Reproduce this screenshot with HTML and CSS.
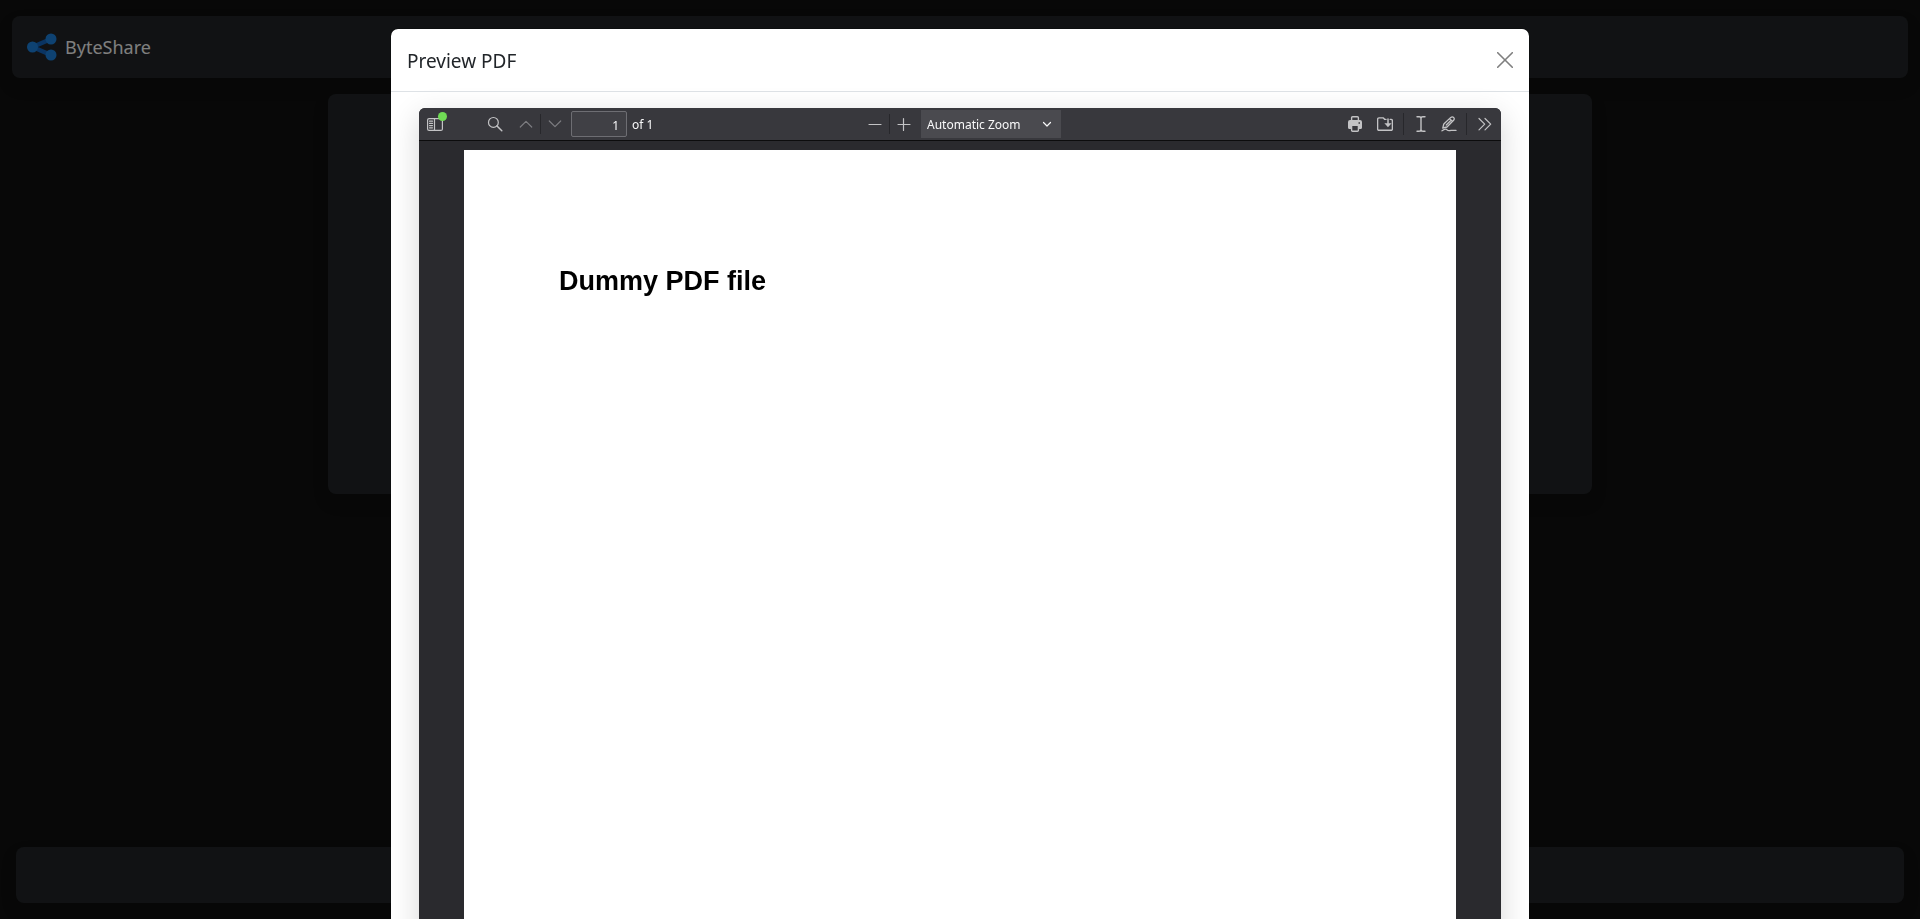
FILE: index.html
```html
<!DOCTYPE html>
<html lang="en">
<head>
<meta charset="utf-8">
<meta name="viewport" content="width=device-width, initial-scale=1">
<title>ByteShare</title>
<link rel="stylesheet" href="styles.css">
</head>
<body>
<div class="app">
  <nav class="navbar">
    <a class="brand" href="#">
      <svg class="brand-logo" viewBox="0 0 30 28" aria-hidden="true">
        <path d="M24 6 5.500 14 24 22" fill="none" stroke="#1468c4" stroke-width="4.500"/>
        <circle cx="5.500" cy="14" r="5.500" fill="#1d85e4"/>
        <circle cx="24" cy="6" r="5.500" fill="#1d85e4"/>
        <circle cx="24" cy="22" r="5.500" fill="#1d85e4"/>
      </svg>
      <span>ByteShare</span>
    </a>
  </nav>
  <main class="content"><section class="card"></section></main>
  <footer class="footer"></footer>
</div>

<div class="backdrop"></div>

<div class="modal" role="dialog" aria-modal="true" aria-labelledby="modal-title">
  <div class="dialog">
    <header class="dialog-header">
      <h1 class="dialog-title" id="modal-title">Preview PDF</h1>
      <button class="close" type="button" aria-label="Close">
        <svg viewBox="0 0 16 16" aria-hidden="true"><path d="M.7.7 15.300 15.300M15.300.7.7 15.300" stroke="currentColor" stroke-width="1.600" stroke-linecap="round"/></svg>
      </button>
    </header>
    <div class="dialog-body">
      <div class="viewer">
        <div class="toolbar">
          <div class="group">
            <button class="tool sidebar-toggle" type="button" aria-label="Toggle Sidebar">
              <svg viewBox="0 0 16 16" aria-hidden="true"><rect x=".6" y="2.600" width="14.800" height="11.800" rx="1.500"/><path d="M7.500 2.500v12M2.500 5.200h3M2.500 7.400h3M2.500 9.600h3M2.500 11.800h3"/></svg>
              <span class="badge"></span>
            </button>
            <button class="tool find" type="button" aria-label="Find in Document">
              <svg viewBox="0 0 16 16" aria-hidden="true"><circle cx="6.400" cy="6.400" r="4.900"/><path d="m10 10 4.800 4.800" stroke-width="1.500"/></svg>
            </button>
            <button class="tool previous" type="button" aria-label="Previous Page" disabled>
              <svg viewBox="0 0 16 16" aria-hidden="true"><path d="m2.300 11 5.700-5.700L13.700 11"/></svg>
            </button>
            <span class="separator"></span>
            <button class="tool" type="button" aria-label="Next Page" disabled>
              <svg viewBox="0 0 16 16" aria-hidden="true"><path d="M2.300 5 8 10.700 13.700 5"/></svg>
            </button>
            <input class="page-number" type="text" value="1" aria-label="Page">
            <span class="page-count">of 1</span>
          </div>
          <div class="group middle">
            <button class="tool" type="button" aria-label="Zoom Out">
              <svg viewBox="0 0 16 16" aria-hidden="true"><path d="M2 8.500h12"/></svg>
            </button>
            <span class="separator"></span>
            <button class="tool" type="button" aria-label="Zoom In">
              <svg viewBox="0 0 16 16" aria-hidden="true"><path d="M2 8.500h12M7.500 2.500v12"/></svg>
            </button>
            <div class="scale">
              <select aria-label="Zoom"><option>Automatic Zoom</option></select>
              <svg class="scale-arrow" viewBox="0 0 16 16" aria-hidden="true"><path d="m4.500 6.500 3.500 3.500 3.500-3.500"/></svg>
            </div>
          </div>
          <div class="group end">
            <button class="tool" type="button" aria-label="Print">
              <svg viewBox="0 0 16 16" aria-hidden="true"><path d="M4.600 5V1.700q0-1 1-1h4.800q1 0 1 1V5" stroke-width="1.400"/><path class="solid" fill-rule="evenodd" d="M3 4h10a2 2 0 0 1 2 2v5.500a1.500 1.500 0 0 1-1.500 1.500h-11A1.500 1.500 0 0 1 1 11.500V6a2 2 0 0 1 2-2ZM5 10v3h6v-3ZM11.500 6.200v1.500H13V6.200Z"/><path d="M4.600 9.800v4.500q0 1 1 1h4.800q1 0 1-1V9.800" stroke-width="1.400"/></svg>
            </button>
            <button class="tool save" type="button" aria-label="Save">
              <svg viewBox="0 0 16 16" aria-hidden="true"><path d="M9 3.400H7.800L6.400 1.900H2A1.400 1.400 0 0 0 .6 3.300v9.600A1.400 1.400 0 0 0 2 14.300h12a1.400 1.400 0 0 0 1.400-1.400V4.800A1.400 1.400 0 0 0 14 3.400h-.8" stroke-width="1.400"/><path d="M11 3v6" stroke-width="1.500"/><path class="solid" d="M7.400 7.200h7.200L11 11.200Z"/></svg>
            </button>
            <span class="separator before-editors"></span>
            <button class="tool" type="button" aria-label="Text">
              <svg viewBox="0 0 16 16" aria-hidden="true"><path d="M4 .8h2.200Q8 .8 8 2.500v11q0 1.700-1.800 1.700H4M12 .8H9.800Q8 .8 8 2.500M8 13.500q0 1.700 1.800 1.700H12" stroke-width="1.400"/></svg>
            </button>
            <button class="tool" type="button" aria-label="Draw">
              <svg viewBox="0 0 16 16" aria-hidden="true"><path d="M1.800 12 2.800 8 9.800 1.400q1.500-1.200 2.800 0 1.300 1.400 0 2.900L6 11ZM8.700 2.600l2.800 2.800M9.800 4.500 5.300 9" stroke-width="1.300"/><path d="M1 14.800c3-2.200 4.200-2 5-1 .8 1 2.200 1 4 .6h5" stroke-width="1.300"/></svg>
            </button>
            <span class="separator before-tools"></span>
            <button class="tool" type="button" aria-label="Tools">
              <svg viewBox="0 0 16 16" aria-hidden="true"><path d="m2 2.500 5.700 5.700L2 13.900M8 2.500l5.700 5.700L8 13.900"/></svg>
            </button>
          </div>
        </div>
        <div class="document">
          <article class="sheet"><h2>Dummy PDF file</h2></article>
        </div>
      </div>
    </div>
  </div>
</div>
</body>
</html>
```
FILE: styles.css
```css
* { box-sizing: border-box; }
html, body { height: 100%; }
body {
  margin: 0;
  overflow: hidden;
  background: #101010;
  color: #212529;
  font-family: "Noto Sans", "Open Sans", sans-serif;
}
button, input, select { font: inherit; color: inherit; }

.app {
  min-height: 100vh;
  padding: 16px 12px;
  display: flex;
  flex-direction: column;
  gap: 16px;
}
.navbar, .card, .footer {
  background: #222528;
  border-radius: 8px;
  box-shadow: 0 8px 16px rgba(0, 0, 0, .15);
}
.navbar {
  height: 62px;
  padding: 0 15px;
  display: flex;
  align-items: center;
}
.brand {
  display: flex;
  align-items: center;
  gap: 8px;
  color: #fff;
  font-size: 18px;
  line-height: 28px;
  text-decoration: none;
}
.brand-logo { width: 30px; height: 28px; }
.content { flex: 1; }
.card { width: 66.667%; height: 400px; margin: 0 auto; }
.footer { height: 56px; margin: 0 4px; }

.backdrop {
  position: fixed;
  inset: 0;
  background: rgba(0, 0, 0, .5);
}
.modal {
  position: fixed;
  inset: 0;
  padding: 28px 16px;
  overflow: hidden;
}
.dialog {
  max-width: 1140px;
  margin: 0 auto;
  background: #fff;
  background-clip: padding-box;
  border: 1px solid rgba(0, 0, 0, .18);
  border-radius: 8px;
}
.dialog-header {
  height: 63px;
  padding: 0 16px;
  display: flex;
  align-items: center;
  justify-content: space-between;
  border-bottom: 1px solid #dee2e6;
}
.dialog-title {
  margin: 2px 0 0;
  font-size: 19px;
  line-height: 28px;
  font-weight: 400;
}
.close {
  width: 32px;
  height: 32px;
  margin-right: -8px;
  padding: 8px;
  border: 0;
  background: none;
  color: #7f7f7f;
}
.close svg { display: block; width: 16px; height: 16px; }
.dialog-body { padding: 16px 28px; }

.viewer {
  overflow: hidden;
  border-radius: 6px;
  background: #2a2a2e;
  box-shadow: 0 8px 30px rgba(0, 0, 0, .16);
}
.toolbar {
  height: 33px;
  padding: 0 2px;
  display: grid;
  grid-template-columns: 1fr auto 1fr;
  background: #38383d;
  border-bottom: 1px solid #0c0c0d;
  color: #f9f9fa;
  font-size: 12px;
  line-height: 16px;
}
.group { display: flex; align-items: center; }
.middle { margin-left: 2px; }
.end { justify-content: flex-end; }
.tool {
  position: relative;
  width: 28px;
  height: 28px;
  padding: 6px;
  border: 0;
  background: none;
  color: #c3c3c5;
}
.tool:disabled { color: #7c7c80; }
.tool svg, .scale-arrow {
  display: block;
  width: 16px;
  height: 16px;
  fill: none;
  stroke: currentColor;
  stroke-width: 1.2;
  stroke-linecap: round;
  stroke-linejoin: round;
}
.tool .solid { fill: currentColor; stroke: none; }
.badge {
  position: absolute;
  top: 2px;
  right: 2px;
  width: 9px;
  height: 9px;
  border-radius: 50%;
  background: #70db55;
}
.find { margin-left: 32px; }
.previous { margin-left: 3px; }
.save { margin-left: 2px; }
.separator { width: 1px; height: 20px; background: #27272b; }
.before-editors { height: 22px; margin: 0 3px 0 4px; }
.before-tools { height: 22px; margin: 0 4px 0 3px; }
.page-number {
  width: 56px;
  height: 26px;
  margin: 0 5px 0 2px;
  padding: 2px 7px 0;
  border: 1px solid #6e6e73;
  border-radius: 2px;
  background: #404045;
  text-align: right;
}
.page-count { padding-top: 2px; }
.scale { position: relative; margin-left: 3px; }
.scale select {
  display: block;
  width: 140px;
  height: 28px;
  padding: 2px 24px 0 6px;
  appearance: none;
  border: 0;
  border-radius: 0;
  background: #4a4a4f;
}
.scale-arrow {
  position: absolute;
  top: 6px;
  right: 6px;
  pointer-events: none;
}
.document { padding: 9px 45px; }
.sheet {
  aspect-ratio: 210 / 297;
  padding: 115px 95px;
  background: #fff;
  color: #000;
}
.sheet h2 {
  margin: 0;
  font: bold 27px/32px "Liberation Sans", Arial, sans-serif;
}
```
